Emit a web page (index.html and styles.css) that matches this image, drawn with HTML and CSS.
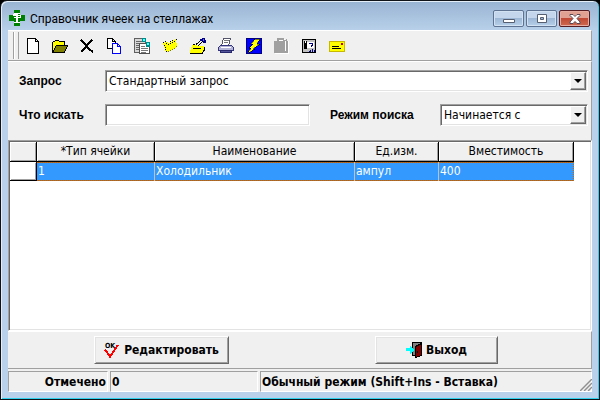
FILE: index.html
```html
<!DOCTYPE html>
<html lang="ru">

<head>
  <meta charset="UTF-8">
  <meta name="viewport" content="width=device-width, initial-scale=1.0">
  <title>Справочник ячеек на стеллажах</title>
  <link rel="stylesheet" href="styles.css">
</head>

<body>
  <div class="window">
    <div class="titlebar">
      <svg class="icon" viewBox="0 0 16 16">
        <path fill="#008000" d="M5 0h6v5h5v6h-5v5H5v-5H0V5h5z" />
        <path fill="#fff" d="M5 3h6v1H9v1h3v3H9v4h2v1H5v-1h2V8H5V7h2V6H4V4h1zM9 6v1h2V6z" />
      </svg>
      <h1>Справочник ячеек на стеллажах</h1>
      <div class="window-buttons">
        <button type="button" class="window-button" aria-label="Свернуть">
          <svg viewBox="0 0 12 10"><path fill="#fff" stroke="#555f70" d="M.5 5.500h11v3H.5z" /></svg>
        </button>
        <button type="button" class="window-button" aria-label="Развернуть">
          <svg viewBox="0 0 12 10"><path fill="#fff" fill-rule="evenodd" stroke="#555f70" d="M1.500.5h9v8h-9zM4.500 3.500h3v2h-3z" /></svg>
        </button>
        <button type="button" class="window-button close" aria-label="Закрыть">
          <svg viewBox="0 0 12 10"><path fill="#fff" stroke="#5a4a55" d="M1 .5h3l2 2 2-2h3v1L8 4.500l3 3.500v1.500H8l-2-2-2 2H1V8l3-3.500L1 1.500z" /></svg>
        </button>
      </div>
    </div>

    <div class="client">
      <div class="toolbar">
        <div class="grip"></div>
        <button type="button" class="tool narrow" aria-label="Создать">
          <svg class="icon" viewBox="0 0 16 16"><path fill="#fff" stroke="#000" d="M2.500.5h8l3 3v12h-11zM10.500.5v3h3" /></svg>
        </button>
        <button type="button" class="tool narrow" aria-label="Открыть">
          <svg class="icon" viewBox="0 0 16 16">
            <path fill="#ff0" stroke="#000" d="M.5 13.500v-9l1-1h1l1-1h3l1 1h5v4h-8l-3 6z" />
            <path fill="#808000" stroke="#000" d="M.5 14.500l4-7h11l-3 7z" />
          </svg>
        </button>
        <button type="button" class="tool narrow" aria-label="Удалить">
          <svg class="icon" viewBox="0 0 16 16"><path fill="none" stroke="#000" stroke-width="2" d="M2 2l3 3 5 6 4 3M13 2L9 6l-4 5-3 3" /></svg>
        </button>
        <button type="button" class="tool" aria-label="Копировать">
          <svg class="icon" viewBox="0 0 16 16">
            <path fill="#fff" stroke="#000" d="M1.500.5h5l3 3v7h-8zM6.500.5v3h3" />
            <path fill="#fff" stroke="#00f" d="M6.500 5.500h5l3 3v7h-8zM11.500 5.500v3h3" />
          </svg>
        </button>
        <button type="button" class="tool" aria-label="Вставить">
          <svg class="icon" viewBox="0 0 16 16">
            <path fill="#d8d8d8" stroke="#606060" d="M.5.5h11v14H.5z" />
            <path stroke="#666" d="M2 3.500h6M2 5.500h3M2 7.500h3M2 9.500h3M2 11.500h3" />
            <path fill="#fff" stroke="#505050" d="M5.500 5.500h10v10h-10z" />
            <path stroke="#777" d="M7 8.500h4M7 10.500h7M7 12.500h7M7 14.500h5" />
            <path fill="#008b8b" d="M8 0h4v4H8zM12 4h4v5h-4z" />
            <path fill="#5ff" d="M9 1h2v2H9zM13 5h2v2h-2z" />
          </svg>
        </button>
        <button type="button" class="tool" aria-label="Папка">
          <svg class="icon" viewBox="0 0 16 16">
            <path fill="#ff0" d="M1 5l3-1 3 1 7-4 1 8-9 5H4z" />
            <path fill="#000" d="M1 4h1v1H1zM3 3h1v1H3zM4 5h1v1H4zM6 6h1v1H6zM8 5h1v1H8zM10 4h1v1h-1zM12 3h1v1h-1zM14 1h1v1h-1zM8 3h1v1H8zM10 2h1v1h-1zM2 7h1v1H2zM3 9h1v1H3zM3 11h1v1H3zM4 13h1v1H4z" />
            <path fill="#808000" d="M6 13h1v1H6zM8 12h1v1H8zM10 11h1v1h-1zM12 10h1v1h-1zM14 8h1v1h-1z" />
          </svg>
        </button>
        <button type="button" class="tool" aria-label="Изменить">
          <svg class="icon" viewBox="0 0 16 16">
            <path fill="#ff0" d="M0 14l2-7h4l2 1h6v4l-2 3H0z" />
            <path fill="none" stroke="#000" stroke-dasharray="2 1" d="M3 6.500h3l2-2 2-1 3 2" />
            <path fill="none" stroke="#000" d="M0 15.500h12l2-3v-4M3 10.500h8M8 8l5-5" />
            <path fill="#008" d="M10 1h2V0h3v2h1v3h-3V3h-3z" />
            <path fill="#66f" d="M13 1h1v2h-1z" />
          </svg>
        </button>
        <button type="button" class="tool" aria-label="Печать">
          <svg class="icon" viewBox="0 0 16 16">
            <path fill="#fff" stroke="#55556a" d="M5.500.5h7l-2 7h-7z" />
            <path stroke="#777" d="M6 2.500h5M6 4.500h4" />
            <path fill="#b4b4d8" stroke="#35357c" d="M2.500 7.500h11l2 2v3h-15v-3z" />
            <path fill="#fff" d="M3 9h10v1H3z" />
            <path fill="#55559c" stroke="#28286c" d="M2.500 12.500h11v2h-11z" />
          </svg>
        </button>
        <button type="button" class="tool narrow" aria-label="Выполнить">
          <svg class="icon" viewBox="0 0 16 16">
            <path fill="#00f" stroke="#000080" d="M.5.5h15v15H.5z" />
            <path fill="#ff0" stroke="#000" stroke-width=".5" d="M9 1h5l-3 5h3L7 11h2l-7 4 3-5H3l4-4H5z" />
          </svg>
        </button>
        <button type="button" class="tool" aria-label="Сохранить" disabled>
          <svg class="icon" viewBox="0 0 16 16">
            <path fill="#fff" d="M5 1h7v2h4v13H2v-1h13V4h-1v9h-1V2H5z" />
            <path fill="#a0a0a0" d="M4 0h7v2h2V1h1v2h1v12H1V3h3z" />
            <path fill="#fff" d="M6 2h4v1H6zM12 3h1v10h-1z" />
          </svg>
        </button>
        <button type="button" class="tool" aria-label="Справка">
          <svg class="icon" viewBox="0 0 16 16">
            <path fill="#c0c0c0" stroke="#000" d="M1.500 1.500h13v13h-13z" />
            <path fill="#000" d="M3 3h3v8H3z" />
            <path fill="#fff" d="M6 4h7v6H6zM4 3h1v2H4z" />
            <path fill="none" stroke="#000080" d="M8 5.500h3.500v2H10V9M8 13.500h1v-2M11 11v3M13.500 12v2" />
          </svg>
        </button>
        <button type="button" class="tool" aria-label="Письмо">
          <svg class="icon" viewBox="0 0 16 16">
            <path fill="#ff0" stroke="#c8b800" d="M.5 3.500h15v10H.5z" />
            <path stroke="#000" d="M3 8.500h7M3 10.500h9" />
            <path fill="#c00000" d="M12 5h2v2h-2z" />
          </svg>
        </button>
      </div>

      <form class="search-panel">
        <div class="field-row">
          <label class="field-label" for="query">Запрос</label>
          <div class="combo">
            <select id="query">
              <option>Стандартный запрос</option>
            </select>
            <span class="combo-arrow"></span>
          </div>
        </div>
        <div class="field-row">
          <label class="field-label" for="searchText">Что искать</label>
          <input type="text" id="searchText" class="text-box">
          <label class="field-label mode-label" for="searchMode">Режим поиска</label>
          <div class="combo mode">
            <select id="searchMode">
              <option>Начинается с</option>
            </select>
            <span class="combo-arrow"></span>
          </div>
        </div>
      </form>

      <div class="grid-box">
        <table class="grid">
          <colgroup>
            <col class="col-mark">
            <col class="col-type">
            <col class="col-name">
            <col class="col-unit">
            <col class="col-size">
          </colgroup>
          <thead>
            <tr>
              <th></th>
              <th>*Тип ячейки</th>
              <th>Наименование</th>
              <th>Ед.изм.</th>
              <th>Вместимость</th>
            </tr>
          </thead>
          <tbody>
            <tr class="selected">
              <th></th>
              <td>1</td>
              <td>Холодильник</td>
              <td>ампул</td>
              <td>400</td>
            </tr>
          </tbody>
        </table>
      </div>

      <div class="actions">
        <button type="button" class="action edit">
          <svg class="icon" viewBox="0 0 16 16">
            <text class="ok-text" x="1" y="6">OK</text>
            <path fill="none" stroke="#f00" stroke-width="2" d="M1 8l2 2 3 5 3-5 5-7" />
          </svg>
          Редактировать
        </button>
        <button type="button" class="action exit">
          <svg class="icon" viewBox="0 0 16 16">
            <path fill="#808080" stroke="#000" d="M6.500.5h9v13h-9z" />
            <path fill="#800000" stroke="#000" d="M9.500 4.500l6-3v12l-6 2z" />
            <path fill="#000" d="M11 9h1v2h-1z" />
            <path fill="#0ff" d="M0 6h4V4h1l3 4-3 4H4V9H0z" />
          </svg>
          Выход
        </button>
      </div>

      <div class="statusbar">
        <div class="status marked">Отмечено</div>
        <div class="status count">0</div>
        <div class="status hint">Обычный режим (Shift+Ins - Вставка)</div>
        <svg class="size-grip" viewBox="0 0 12 12">
          <path stroke="#fff" d="M-1 12L12 -1M3 12l9-9M7 12l5-5" />
          <path stroke="#909090" stroke-width="1.500" d="M0 12L12 0M4 12l8-8M8 12l4-4" />
        </svg>
      </div>
    </div>
  </div>
</body>

</html>
```
FILE: styles.css
```css
* {
  margin: 0;
  padding: 0;
  box-sizing: border-box;
}

body {
  font-family: 'DejaVu Sans Condensed', 'DejaVu Sans', sans-serif;
  font-size: 12px;
  color: #000;
  background: #000;
}

button,
input,
select {
  font: inherit;
  color: inherit;
}

.icon {
  display: block;
  width: 16px;
  height: 16px;
  flex: none;
  shape-rendering: crispEdges;
}

.window {
  display: flex;
  flex-direction: column;
  min-height: 100vh;
  padding: 0 7px 7px;
  border: 1px solid #101418;
  border-radius: 7px 7px 0 0;
  background: linear-gradient(#98b3d2, #b9d1ea 30px);
  box-shadow: inset 1px 1px #e4eef8, inset -1px -1px #2fd0ee;
}

/* title bar */
.titlebar {
  display: flex;
  height: 29px;
  padding: 0 2px 0 1px;
}

.titlebar .icon {
  margin-top: 9px;
}

.titlebar h1 {
  flex: 1;
  margin-left: 5px;
  font-family: Roboto, 'Open Sans', sans-serif;
  font-size: 12px;
  font-weight: normal;
  line-height: 36px;
}

.window-buttons {
  display: flex;
  gap: 2px;
  margin-top: 9px;
}

.window-button {
  display: flex;
  align-items: center;
  justify-content: center;
  width: 31px;
  height: 17px;
  border: 1px solid #5d7391;
  border-radius: 2px;
  background: linear-gradient(#c3d6eb 45%, #9db8d6 50%, #b7d0ea);
  box-shadow: inset 0 0 0 1px #d3e2f2;
}

.window-button svg {
  width: 12px;
  height: 10px;
}

.window-button.close {
  border-color: #551c22;
  background: linear-gradient(#e0a092 45%, #c04a35 50%, #cf6a50);
  box-shadow: inset 0 0 0 1px #e5ada2;
}

.client {
  display: flex;
  flex: 1;
  flex-direction: column;
  background: #f0f0f0;
}

/* toolbar */
.toolbar {
  display: flex;
  height: 31px;
  padding-left: 5px;
  border-top: 1px solid #fff;
  border-right: 1px solid #a0a0a0;
  border-bottom: 1px solid #a0a0a0;
}

.grip {
  width: 6px;
  margin: 1px 0;
  border: solid #a0a0a0;
  border-width: 0 1px;
  box-shadow: inset 1px 0 #fff;
}

.tool {
  display: flex;
  align-items: center;
  justify-content: center;
  width: 28px;
  border: none;
  background: none;
}

.tool.narrow {
  width: 27px;
}

/* search fields */
.search-panel {
  display: flex;
  flex-direction: column;
  gap: 12px;
  padding: 8px 3px 14px 11px;
  border-top: 1px solid #fff;
  border-right: 1px solid #a0a0a0;
}

.field-row {
  display: flex;
  align-items: center;
}

.field-label {
  width: 86px;
  font-family: 'Liberation Sans', sans-serif;
  font-size: 12px;
  font-weight: bold;
}

.mode-label {
  width: 110px;
  margin-left: 20px;
}

.combo,
.text-box {
  flex: 1;
  min-width: 0;
  height: 22px;
  border: 1px solid;
  border-color: #a0a0a0 #fff #fff #a0a0a0;
  border-radius: 0;
  background: #fff;
  box-shadow: inset 1px 1px #696969, inset -1px -1px #e3e3e3;
}

.combo {
  position: relative;
}

.combo.mode {
  flex: none;
  width: 148px;
}

.combo select {
  width: 100%;
  height: 20px;
  padding: 0 20px 0 3px;
  border: none;
  appearance: none;
  background: none;
}

.text-box {
  padding: 0 3px;
}

.combo-arrow {
  position: absolute;
  top: 1px;
  right: 1px;
  width: 16px;
  height: 18px;
  border: 1px solid;
  border-color: #fff #696969 #696969 #fff;
  background: #f0f0f0;
  box-shadow: inset -1px -1px #a0a0a0;
  pointer-events: none;
}

.combo-arrow::after {
  content: '';
  position: absolute;
  top: 6px;
  left: 3px;
  border: 4px solid transparent;
  border-top-color: #000;
  border-bottom: none;
}

/* data grid */
.grid-box {
  flex: 1;
  border: 1px solid;
  border-color: #a0a0a0 #fff #fff #a0a0a0;
  background: #fff;
  box-shadow: inset 1px 1px #696969, inset -1px -1px #e3e3e3;
  padding: 1px;
}

.grid {
  table-layout: fixed;
  width: 564px;
  border-collapse: separate;
  border-spacing: 0;
}

.col-mark {
  width: 27px;
}

.col-type {
  width: 118px;
}

.col-name {
  width: 200px;
}

.col-unit {
  width: 84px;
}

.col-size {
  width: 135px;
}

.grid th {
  height: 20px;
  border-right: 1px solid #000;
  border-bottom: 1px solid #000;
  background: #f0f0f0;
  box-shadow: inset 1px 1px #fff, inset -1px -1px #a0a0a0;
  font-weight: normal;
  line-height: 19px;
}

.grid td {
  height: 19px;
  padding-left: 1px;
  border-right: 1px solid #c0c0c0;
  line-height: 19px;
}

.grid tbody th {
  height: 19px;
  background: #fff;
}

/* the row focus is a dotted line along its top and bottom edges */
.grid .selected td {
  background:
    repeating-linear-gradient(90deg, #cc6600 0 1px, #8a6a4a 1px 2px) top / 100% 1px no-repeat,
    repeating-linear-gradient(90deg, #cc6600 0 1px, #8a6a4a 1px 2px) bottom / 100% 1px no-repeat,
    #3399ff;
  color: #fff;
}

.grid .selected td:last-child {
  border-right: 1px dotted #cc6600;
}

/* action buttons */
.actions {
  display: flex;
  gap: 146px;
  padding: 4px 0 4px 86px;
  border-top: 1px solid #fff;
  border-right: 1px solid #a0a0a0;
  border-bottom: 1px solid #a0a0a0;
}

.action {
  display: flex;
  align-items: center;
  justify-content: center;
  gap: 4px;
  height: 28px;
  border: 1px solid;
  border-color: #fff #696969 #696969 #fff;
  background: #f0f0f0;
  box-shadow: inset 1px 1px #e3e3e3, inset -1px -1px #a0a0a0;
  font-weight: bold;
}

.action.edit {
  width: 135px;
}

.action.exit {
  width: 123px;
}

.ok-text {
  font-size: 7px;
}

/* status bar */
.statusbar {
  position: relative;
  display: flex;
  gap: 2px;
  padding-top: 2px;
}

.status {
  height: 21px;
  padding: 0 1px;
  border: 1px solid;
  border-color: #a0a0a0 #fff #fff #a0a0a0;
  font-weight: bold;
  line-height: 20px;
}

.marked {
  width: 100px;
  text-align: right;
}

.count {
  width: 148px;
}

.hint {
  flex: 1;
}

.size-grip {
  position: absolute;
  right: 0;
  bottom: 1px;
  width: 12px;
  height: 12px;
}
```
